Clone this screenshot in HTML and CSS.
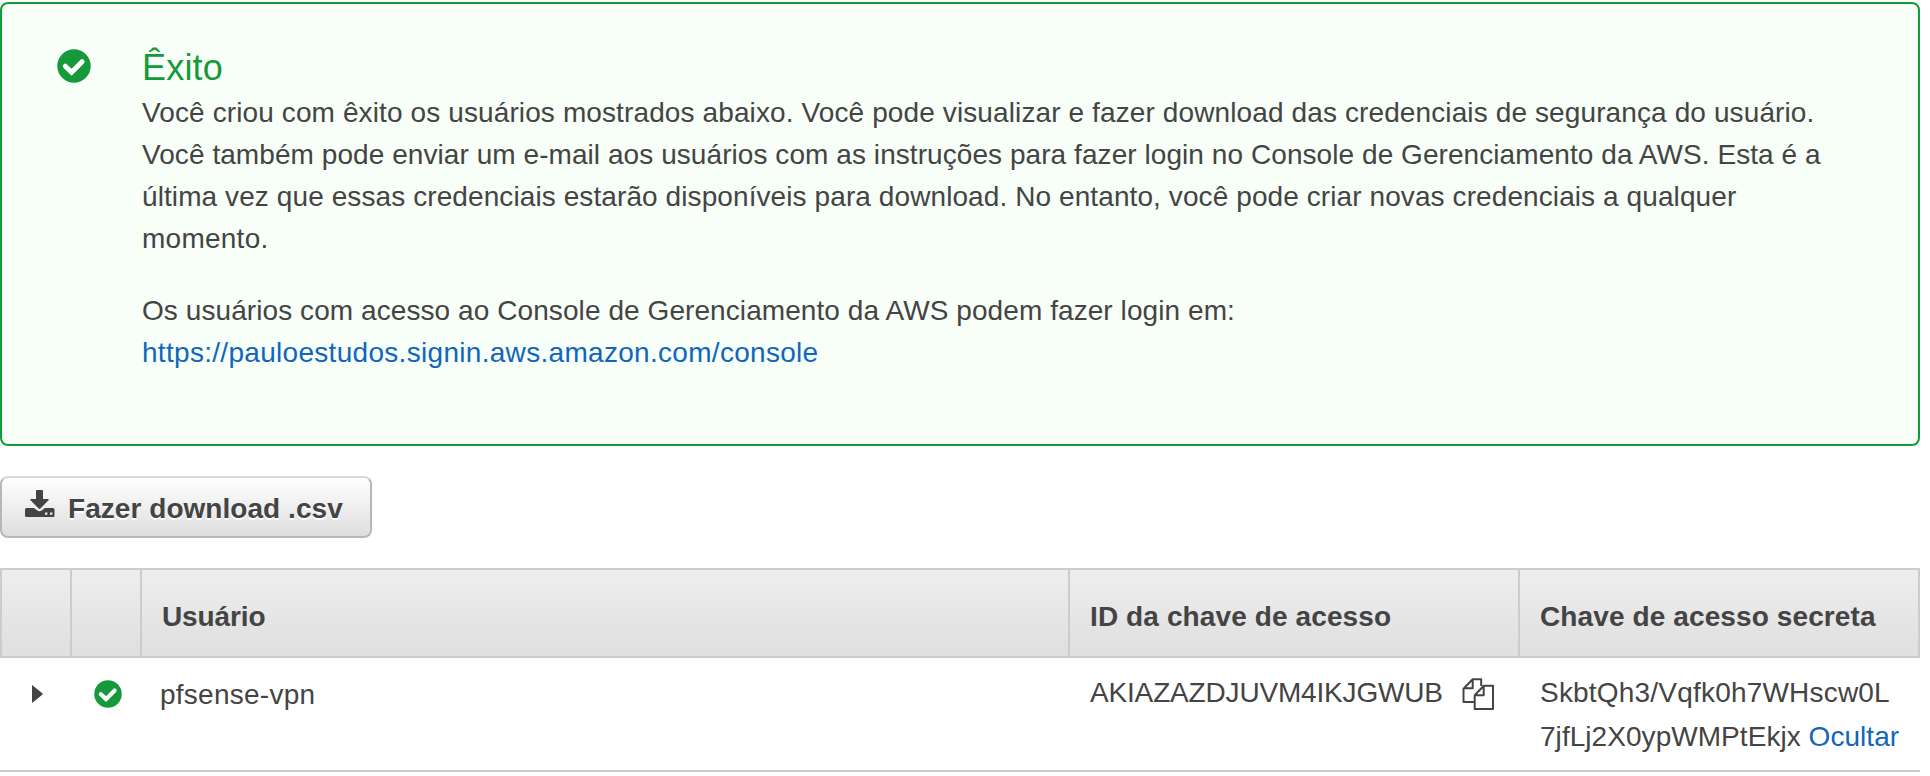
FILE: index.html
```html
<!DOCTYPE html>
<html lang="pt-BR">
<head>
<meta charset="utf-8">
<title>Êxito</title>
<link rel="stylesheet" href="styles.css">
</head>
<body>
<main class="page">
  <section class="alert">
    <svg class="alert-icon" viewBox="0 0 34 34"><circle cx="17" cy="17" r="16.7" fill="#16993a"/><path d="M8.300 17.200l6.300 6L25.100 12.700" fill="none" stroke="#fff" stroke-width="5" stroke-linecap="round"/></svg>
    <div class="alert-body">
      <h1 class="alert-title">Êxito</h1>
      <p class="alert-text"><span class="l1">Você criou com êxito os usuários mostrados abaixo. Você pode visualizar e fazer download das credenciais de segurança do usuário.</span><br><span class="l2">Você também pode enviar um e-mail aos usuários com as instruções para fazer login no Console de Gerenciamento da AWS. Esta é a</span><br><span class="l3">última vez que essas credenciais estarão disponíveis para download. No entanto, você pode criar novas credenciais a qualquer</span><br><span class="l4">momento.</span></p>
      <p class="alert-text"><span class="l5">Os usuários com acesso ao Console de Gerenciamento da AWS podem fazer login em:</span><br><a class="link l6">https://pauloestudos.signin.aws.amazon.com/console</a></p>
    </div>
  </section>

  <button class="download" type="button">
    <svg class="download-icon" viewBox="0 0 30 28"><path fill="#444" d="M11 1q0-1 1-1h5q1 0 1 1v8h5q1.400 0 .5 1.200L15.400 18.600q-.9.800-1.800 0L5.500 10.200Q4.600 9 6 9h5z"/><path fill="#444" fill-rule="evenodd" d="M1.500 18h7.500l3.300 2.500q2.200 1.500 4.400 0L20 18h8q1.500 0 1.500 1.500v6q0 1.500-1.500 1.500H1.500Q0 27 0 25.500v-6Q0 18 1.500 18zM20 22.400v2.400h2.400v-2.400zM25 22.400v2.400h2.400v-2.400z"/></svg>
    <span class="download-label">Fazer download .csv</span>
  </button>

  <table class="users">
    <colgroup><col class="c-toggle"><col class="c-status"><col class="c-user"><col class="c-id"><col class="c-secret"></colgroup>
    <thead>
      <tr><th></th><th></th><th><span class="h1">Usuário</span></th><th><span class="h2">ID da chave de acesso</span></th><th><span class="h2">Chave de acesso secreta</span></th></tr>
    </thead>
    <tbody>
      <tr>
        <td class="toggle"><svg class="caret" viewBox="0 0 11 18"><path d="M0 .5Q0-.3.700.4L10.300 8.300Q11 9 10.300 9.700L.7 17.600Q0 18.300 0 17.500z" fill="#444"/></svg></td>
        <td class="status"><svg class="ok" viewBox="0 0 34 34"><circle cx="17" cy="17" r="16.700" fill="#16993a"/><path d="M8.300 17.200l6.300 6L25.100 12.700" fill="none" stroke="#fff" stroke-width="5" stroke-linecap="round"/></svg></td>
        <td class="user"><span class="r1">pfsense-vpn</span></td>
        <td><div class="key"><span class="r2">AKIAZAZDJUVM4IKJGWUB</span><svg class="copy" viewBox="0 0 32 32" fill="none" stroke="#444" stroke-width="2" stroke-linejoin="round"><path d="M12 24H1.500V10.700L10.700 1.200H19.200V8M10.700 1v9.300H1.500"/><path d="M13 17L21.700 7.700H31V31H12.700V17.300H21.700V7.700"/></svg></div></td>
        <td class="secret"><span class="r3">SkbtQh3/Vqfk0h7WHscw0L</span><br><span class="r4">7jfLj2X0ypWMPtEkjx <a class="link">Ocultar</a></span></td>
      </tr>
    </tbody>
  </table>
</main>
</body>
</html>
```
FILE: styles.css
```css
* { box-sizing: border-box; }
body {
  margin: 0;
  background: #fff;
  color: #444;
  font: 28px/42px "Liberation Sans", Arial, sans-serif;
}
.page { width: 1920px; padding-top: 2px; }
.alert {
  display: flex;
  height: 444px;
  padding: 41px 60px 0 55px;
  border: 2px solid #16993a;
  border-radius: 8px;
  background: #f7fff8;
}
.alert-icon { flex: none; width: 34px; height: 34px; margin: 4px 51px 0 0; }
.alert-body { white-space: nowrap; }
.alert-title {
  margin: 0 0 2px;
  color: #16993a;
  font-size: 36px;
  font-weight: 400;
  line-height: 45px;
  letter-spacing: .2px;
}
.alert-text { margin: 0 0 30px; }
.l1 { letter-spacing: .115px; }
.l2 { letter-spacing: .065px; }
.l3 { letter-spacing: .092px; }
.l4 { letter-spacing: .25px; }
.l5 { letter-spacing: .077px; }
.l6 { letter-spacing: .3px; }
.link { color: #1166bb; text-decoration: none; }
.download {
  display: flex;
  align-items: flex-start;
  gap: 13px;
  width: 372px;
  height: 62px;
  margin: 30px 0;
  padding: 10px 0 0 23px;
  border: 2px solid #b7b7b7;
  border-top-color: #d9d9d9;
  border-radius: 8px;
  background: linear-gradient(#fff, #dedede);
  color: #444;
  font: bold 28px/42px "Liberation Sans", Arial, sans-serif;
  letter-spacing: .05px;
  text-shadow: 0 2px 1px #fff;
  white-space: nowrap;
}
.download-icon { flex: none; width: 30px; height: 28px; margin-top: 2px; }
.users {
  width: 1920px;
  table-layout: fixed;
  border-collapse: separate;
  border-spacing: 0;
}
.c-toggle { width: 72px; }
.c-status { width: 70px; }
.c-user { width: 928px; }
.c-id { width: 450px; }
.c-secret { width: 400px; }
.users th {
  height: 90px;
  padding: 7px 0 0 20px;
  border: solid #ccc;
  border-width: 2px 2px 2px 0;
  background: linear-gradient(#eee, #dfdfdf);
  text-align: left;
  white-space: nowrap;
}
.users th:first-child { border-left-width: 2px; }
.h1 { letter-spacing: -.1px; }
.h2 { letter-spacing: .11px; }
.users td {
  height: 114px;
  padding: 13px 0 0 20px;
  border-bottom: 2px solid #ccc;
  line-height: 44px;
  vertical-align: top;
  white-space: nowrap;
}
.users .toggle { padding: 27px 0 0 32px; line-height: 0; }
.users .status { padding: 22px 0 0 22px; line-height: 0; }
.users .user { padding: 15px 0 0 18px; }
.r1 { letter-spacing: .25px; }
.r2 { letter-spacing: -.17px; }
.r3 { letter-spacing: .2px; }
.r4 { letter-spacing: .05px; }
.caret { width: 11px; height: 18px; }
.ok { width: 28px; height: 28px; }
.key { display: flex; gap: 19px; }
.copy { width: 32px; height: 32px; margin-top: 7px; }
```
